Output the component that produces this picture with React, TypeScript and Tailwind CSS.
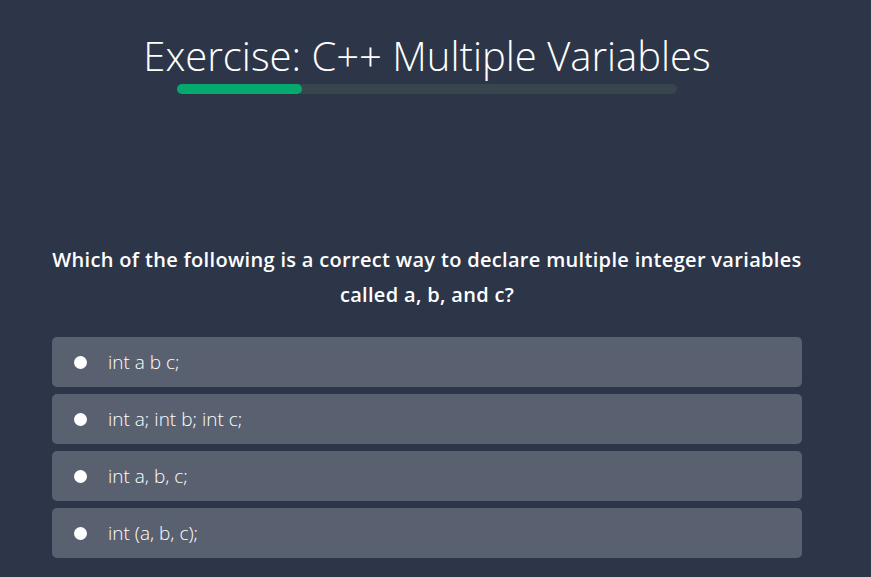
const options = ["int a b c;", "int a; int b; int c;", "int a, b, c;", "int (a, b, c);"];

export default function App() {
  return (
    <div className="min-h-[577px] w-full bg-[#2d3648]">
      <div className="flex w-[854px] flex-col items-center">
        <h1 className="mt-[30px] text-[40px] font-light leading-[52px] text-white [font-family:'Open_Sans',sans-serif]">
          Exercise: C++ Multiple Variables
        </h1>
        <div className="mt-[2px] h-[10px] w-[500px] rounded-full bg-[#38454c]">
          <div className="h-full w-[125px] rounded-full bg-[#04aa6d]" />
        </div>

        <p className="mt-[148px] w-[760px] text-center text-[20px] font-semibold leading-[35px] tracking-[0.32px] text-white [font-family:'Open_Sans',sans-serif]">
          Which of the following is a correct way to declare multiple integer variables called a, b, and c?
        </p>

        <div className="mt-[25px] flex w-[750px] flex-col gap-[7px]">
          {options.map((o) => (
            <label
              key={o}
              className="flex h-[50px] items-center rounded-[5px] bg-[#596170] pl-[22px] text-[19px] font-light text-white [font-family:'Open_Sans',sans-serif]"
            >
              <span className="h-[13px] w-[13px] rounded-full bg-white" />
              <span className="ml-[21px]">{o}</span>
            </label>
          ))}
        </div>
      </div>
    </div>
  );
}
